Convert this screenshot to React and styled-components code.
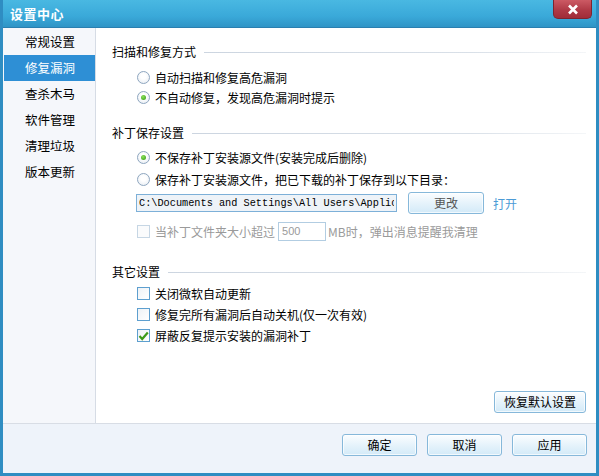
import React from 'react';
import styled, { createGlobalStyle } from 'styled-components';

const GlobalStyle = createGlobalStyle`
  html, body { margin: 0; padding: 0; background: #fff; }
  body { font-family: "Noto Sans CJK SC", "Liberation Sans", sans-serif; font-size: 12px; color: #000; }
  * { box-sizing: border-box; }
`;

const Window = styled.div`
  width: 599px;
  height: 476px;
  display: flex;
  flex-direction: column;
  background: #2f8dc2;
  border: 3px solid #2f8dc2;
  border-top: none;
  overflow: hidden;
`;

const TitleBar = styled.div`
  height: 28px;
  margin: 0 -3px;
  padding: 0 7px 0 10px;
  display: flex;
  align-items: flex-start;
  justify-content: space-between;
  background: linear-gradient(#49b8e2, #3aa9d9 60%, #2f94c6);
  border-bottom: 1px solid #2a7fb0;
`;

const Title = styled.div`
  color: #fff;
  font-weight: bold;
  font-size: 13px;
  line-height: 28px;
  letter-spacing: 0.5px;
`;

const CloseButton = styled.div`
  width: 39px;
  height: 19px;
  display: flex;
  align-items: center;
  justify-content: center;
  background: linear-gradient(#cc5a64, #b03a46 55%, #a02c38);
  border: 1px solid #7e2430;
  border-top: none;
  border-radius: 0 0 5px 5px;
`;

const Body = styled.div`
  flex: 1;
  display: flex;
  background: #fff;
  min-height: 0;
`;

const Sidebar = styled.div`
  width: 93px;
  padding-top: 1px;
  background: #f5f7fb;
  border-right: 1px solid #d6dce5;
  display: flex;
  flex-direction: column;
`;

const NavItem = styled.div`
  height: 26px;
  line-height: 26px;
  padding-left: ${p => (p.$active ? '21px' : '22px')};
  margin-left: ${p => (p.$active ? '1px' : '0')};
  font-size: 12.5px;
  color: ${p => (p.$active ? '#fff' : '#000')};
  background: ${p => (p.$active ? '#2e8fd5' : 'transparent')};
`;

const Content = styled.div`
  flex: 1;
  display: flex;
  flex-direction: column;
  padding: 16px 10px 10px 16px;
`;

const SectionHead = styled.div`
  display: flex;
  align-items: center;
  height: 16px;
  margin-top: ${p => p.$top || 0}px;
  font-size: 12px;
  line-height: 16px;
`;

const HeadLine = styled.div`
  flex: 1;
  height: 1px;
  margin: 0 0 0 8px;
  background: linear-gradient(to right, #ccd5e0, #d9e0e8 70%, #f4f6f8);
`;

const Row = styled.label`
  display: flex;
  align-items: center;
  height: ${p => p.$h || 20}px;
  margin-top: ${p => p.$top || 0}px;
  margin-left: 25px;
  gap: 5px;
  color: ${p => (p.$disabled ? '#9a9a9a' : '#000')};
  font-size: 12px;
  white-space: nowrap;
`;

const RadioDot = styled.span`
  width: 13px;
  height: 13px;
  border-radius: 50%;
  border: 1px solid #8ea6bf;
  background: radial-gradient(circle at 50% 40%, #ffffff 30%, #e4eaf1 100%);
  display: flex;
  align-items: center;
  justify-content: center;
  flex: none;
  &::after {
    content: '';
    display: ${p => (p.$checked ? 'block' : 'none')};
    width: 5px;
    height: 5px;
    border-radius: 50%;
    background: radial-gradient(circle at 40% 35%, #8de05a, #2f9a12);
  }
`;

const CheckBox = styled.span`
  width: 13px;
  height: 13px;
  border: 1px solid ${p => (p.$disabled ? '#c6d6e4' : '#5d9fcf')};
  background: ${p => (p.$disabled ? '#fafbfc' : 'linear-gradient(135deg, #eef2f6, #ffffff)')};
  display: flex;
  align-items: center;
  justify-content: center;
  flex: none;
`;

const PathRow = styled.div`
  display: flex;
  align-items: center;
  height: 24px;
  margin-top: 1px;
  margin-left: 24px;
`;

const PathInput = styled.input`
  width: 261px;
  height: 18px;
  padding: 0 2px;
  border: 1px solid #7db0d8;
  background: #eef3f8;
  font-family: "Liberation Mono", "DejaVu Sans Mono", monospace;
  font-size: 10.25px;
  color: #000;
  outline: none;
`;

const Button = styled.button`
  width: ${p => p.$w || 75}px;
  height: 22px;
  margin-left: ${p => p.$ml || 0}px;
  padding: 0;
  border: 1px solid #86b8da;
  border-radius: 3px;
  background: linear-gradient(#fbfdff, #e6f3fb 50%, #d3eaf8);
  font-family: "Noto Sans CJK SC", sans-serif;
  font-size: 12px;
  color: ${p => (p.$muted ? '#555' : '#000')};
  line-height: 20px;
  box-shadow: inset 0 0 0 1px rgba(255, 255, 255, 0.7);
`;

const LinkText = styled.span`
  margin-left: 9px;
  color: #4c9bd6;
  font-size: 12px;
`;

const SmallInput = styled.input`
  width: 48px;
  height: 19px;
  margin: 0 -3px 0 -2px;
  padding: 0 3px;
  border: 1px solid #b2cde2;
  background: #fff;
  font-family: "Liberation Sans", sans-serif;
  font-size: 11px;
  color: #9a9a9a;
  outline: none;
`;

const RestoreWrap = styled.div`
  margin-top: auto;
  display: flex;
  justify-content: flex-end;
`;

const Footer = styled.div`
  height: 50px;
  display: flex;
  justify-content: flex-end;
  align-items: flex-start;
  gap: 10px;
  padding: 10px 9px 0 0;
  background: #eef3fa;
  border-top: 1px solid #d8dde5;
`;

const Radio = ({ checked, children, top, h }) => (
  <Row $top={top} $h={h}>
    <RadioDot $checked={checked} />
    <span>{children}</span>
  </Row>
);

const Check = ({ checked, children, top, h }) => (
  <Row $top={top} $h={h}>
    <CheckBox>
      {checked && (
        <svg width="11" height="10" viewBox="0 0 11 10">
          <path d="M1.5 5 L4.2 8 L9.8 1.5" fill="none" stroke="#3c9a18" strokeWidth="2.2" />
        </svg>
      )}
    </CheckBox>
    <span>{children}</span>
  </Row>
);

const navItems = ['常规设置', '修复漏洞', '查杀木马', '软件管理', '清理垃圾', '版本更新'];

export default function App() {
  return (
    <>
      <GlobalStyle />
      <Window>
        <TitleBar>
          <Title>设置中心</Title>
          <CloseButton>
            <svg width="12" height="11" viewBox="0 0 12 11">
              <path d="M2 1.5 L10 9.5 M10 1.5 L2 9.5" stroke="#fff" strokeWidth="2.6" />
            </svg>
          </CloseButton>
        </TitleBar>
        <Body>
          <Sidebar>
            {navItems.map(n => (
              <NavItem key={n} $active={n === '修复漏洞'}>{n}</NavItem>
            ))}
          </Sidebar>
          <Content>
            <SectionHead>
              扫描和修复方式<HeadLine />
            </SectionHead>
            <Radio top={7}>自动扫描和修复高危漏洞</Radio>
            <Radio checked>不自动修复，发现高危漏洞时提示</Radio>

            <SectionHead $top={18}>
              补丁保存设置<HeadLine />
            </SectionHead>
            <Radio checked top={5} h={22}>不保存补丁安装源文件(安装完成后删除)</Radio>
            <Radio h={22}>保存补丁安装源文件，把已下载的补丁保存到以下目录：</Radio>
            <PathRow>
              <PathInput readOnly value={'C:\\Documents and Settings\\All Users\\Application Data\\Patch'} />
              <Button $w={76} $ml={11} $muted>更改</Button>
              <LinkText>打开</LinkText>
            </PathRow>
            <Row $top={5} $h={22} $disabled>
              <CheckBox $disabled />
              <span>当补丁文件夹大小超过</span>
              <SmallInput readOnly value="500" />
              <span>MB时，弹出消息提醒我清理</span>
            </Row>

            <SectionHead $top={22}>
              其它设置<HeadLine />
            </SectionHead>
            <Check top={3} h={21}>关闭微软自动更新</Check>
            <Check h={21}>修复完所有漏洞后自动关机(仅一次有效)</Check>
            <Check checked h={21}>屏蔽反复提示安装的漏洞补丁</Check>

            <RestoreWrap>
              <Button $w={92}>恢复默认设置</Button>
            </RestoreWrap>
          </Content>
        </Body>
        <Footer>
          <Button>确定</Button>
          <Button>取消</Button>
          <Button>应用</Button>
        </Footer>
      </Window>
    </>
  );
}
